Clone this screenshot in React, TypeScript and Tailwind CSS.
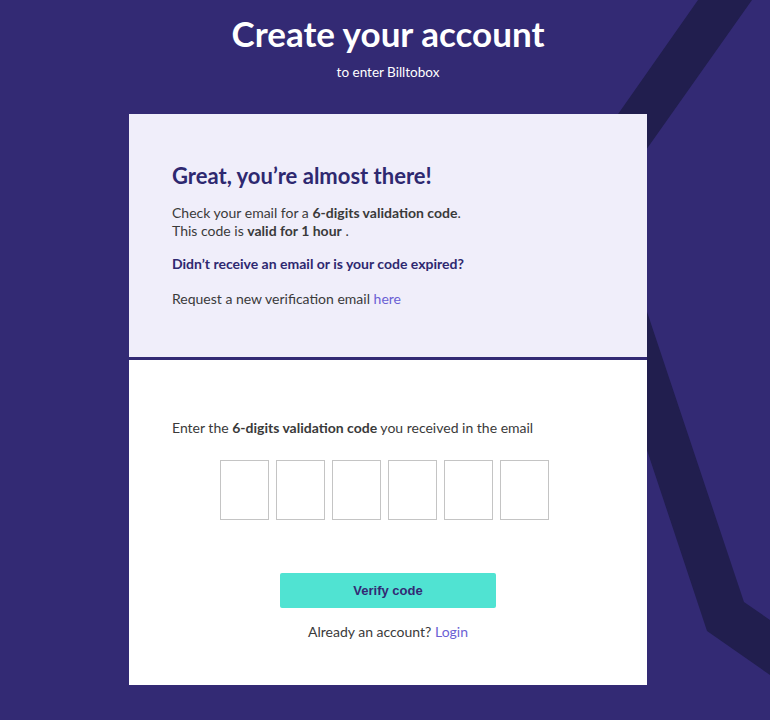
import React from "react";

export default function App() {
  const digits = [0, 1, 2, 3, 4, 5];
  return (
    <div
      className="relative min-h-[720px] w-full overflow-hidden bg-[#332a74]"
      style={{ fontFamily: "Lato, 'Noto Sans', sans-serif" }}
    >
      <svg
        className="pointer-events-none absolute left-0 top-0"
        width="770"
        height="720"
        viewBox="0 0 770 720"
      >
        <polygon
          points="698,0 752,0 610,201 744,602 770,620 770,675 707,631 562,194"
          fill="#211e4e"
        />
      </svg>

      <div className="relative flex flex-col items-center pl-[6px]">
        <h1 className="mt-[11px] text-[35px] font-bold leading-[44px] text-white">
          Create your account
        </h1>
        <p className="mt-[9px] text-[13.5px] leading-[16px] text-white">to enter Billtobox</p>

        <div className="mt-[34px] w-[518px]">
          <div className="h-[243px] bg-[#f0eefa] px-[43px] pt-[48px]">
            <h2 className="text-[22px] font-bold leading-[28px] text-[#2e2870]">
              Great, you’re almost there!
            </h2>
            <p className="mt-[14px] text-[14px] leading-[18px] text-[#3a3a3a]">
              Check your email for a <span className="font-bold">6-digits validation code</span>.
              <br />
              This code is <span className="font-bold">valid for 1 hour</span> .
            </p>
            <p className="mt-[15px] text-[14px] font-bold leading-[18px] text-[#2e2870]">
              Didn’t receive an email or is your code expired?
            </p>
            <p className="mt-[17px] text-[14px] leading-[18px] text-[#3a3a3a]">
              Request a new verification email{" "}
              <a className="text-[#6b5fd4]" href="#">
                here
              </a>
            </p>
          </div>
          <div className="h-[3px] bg-[#332a74]" />
          <div className="h-[325px] bg-white px-[43px] pt-[59px]">
            <p className="text-[14px] leading-[18px] text-[#3a3a3a]">
              Enter the <span className="font-bold">6-digits validation code</span> you received in the email
            </p>
            <div className="mt-[23px] flex justify-center gap-[7px] pr-[7px]">
              {digits.map((d) => (
                <input
                  key={d}
                  className="h-[60px] w-[49px] border border-[#c4c4c4] bg-white text-center outline-none"
                  maxLength={1}
                />
              ))}
            </div>
            <div className="mt-[53px] flex justify-center">
              <button
                className="h-[35px] w-[216px] rounded-[2px] bg-[#50e3d2] text-[13px] font-bold text-[#332a74]"
                style={{ fontFamily: "'Liberation Sans', Arial, sans-serif" }}
              >
                Verify code
              </button>
            </div>
            <p className="mt-[15px] text-center text-[14px] leading-[18px] text-[#3a3a3a]">
              Already an account?{" "}
              <a className="text-[#6b5fd4]" href="#">
                Login
              </a>
            </p>
          </div>
        </div>
      </div>
    </div>
  );
}
